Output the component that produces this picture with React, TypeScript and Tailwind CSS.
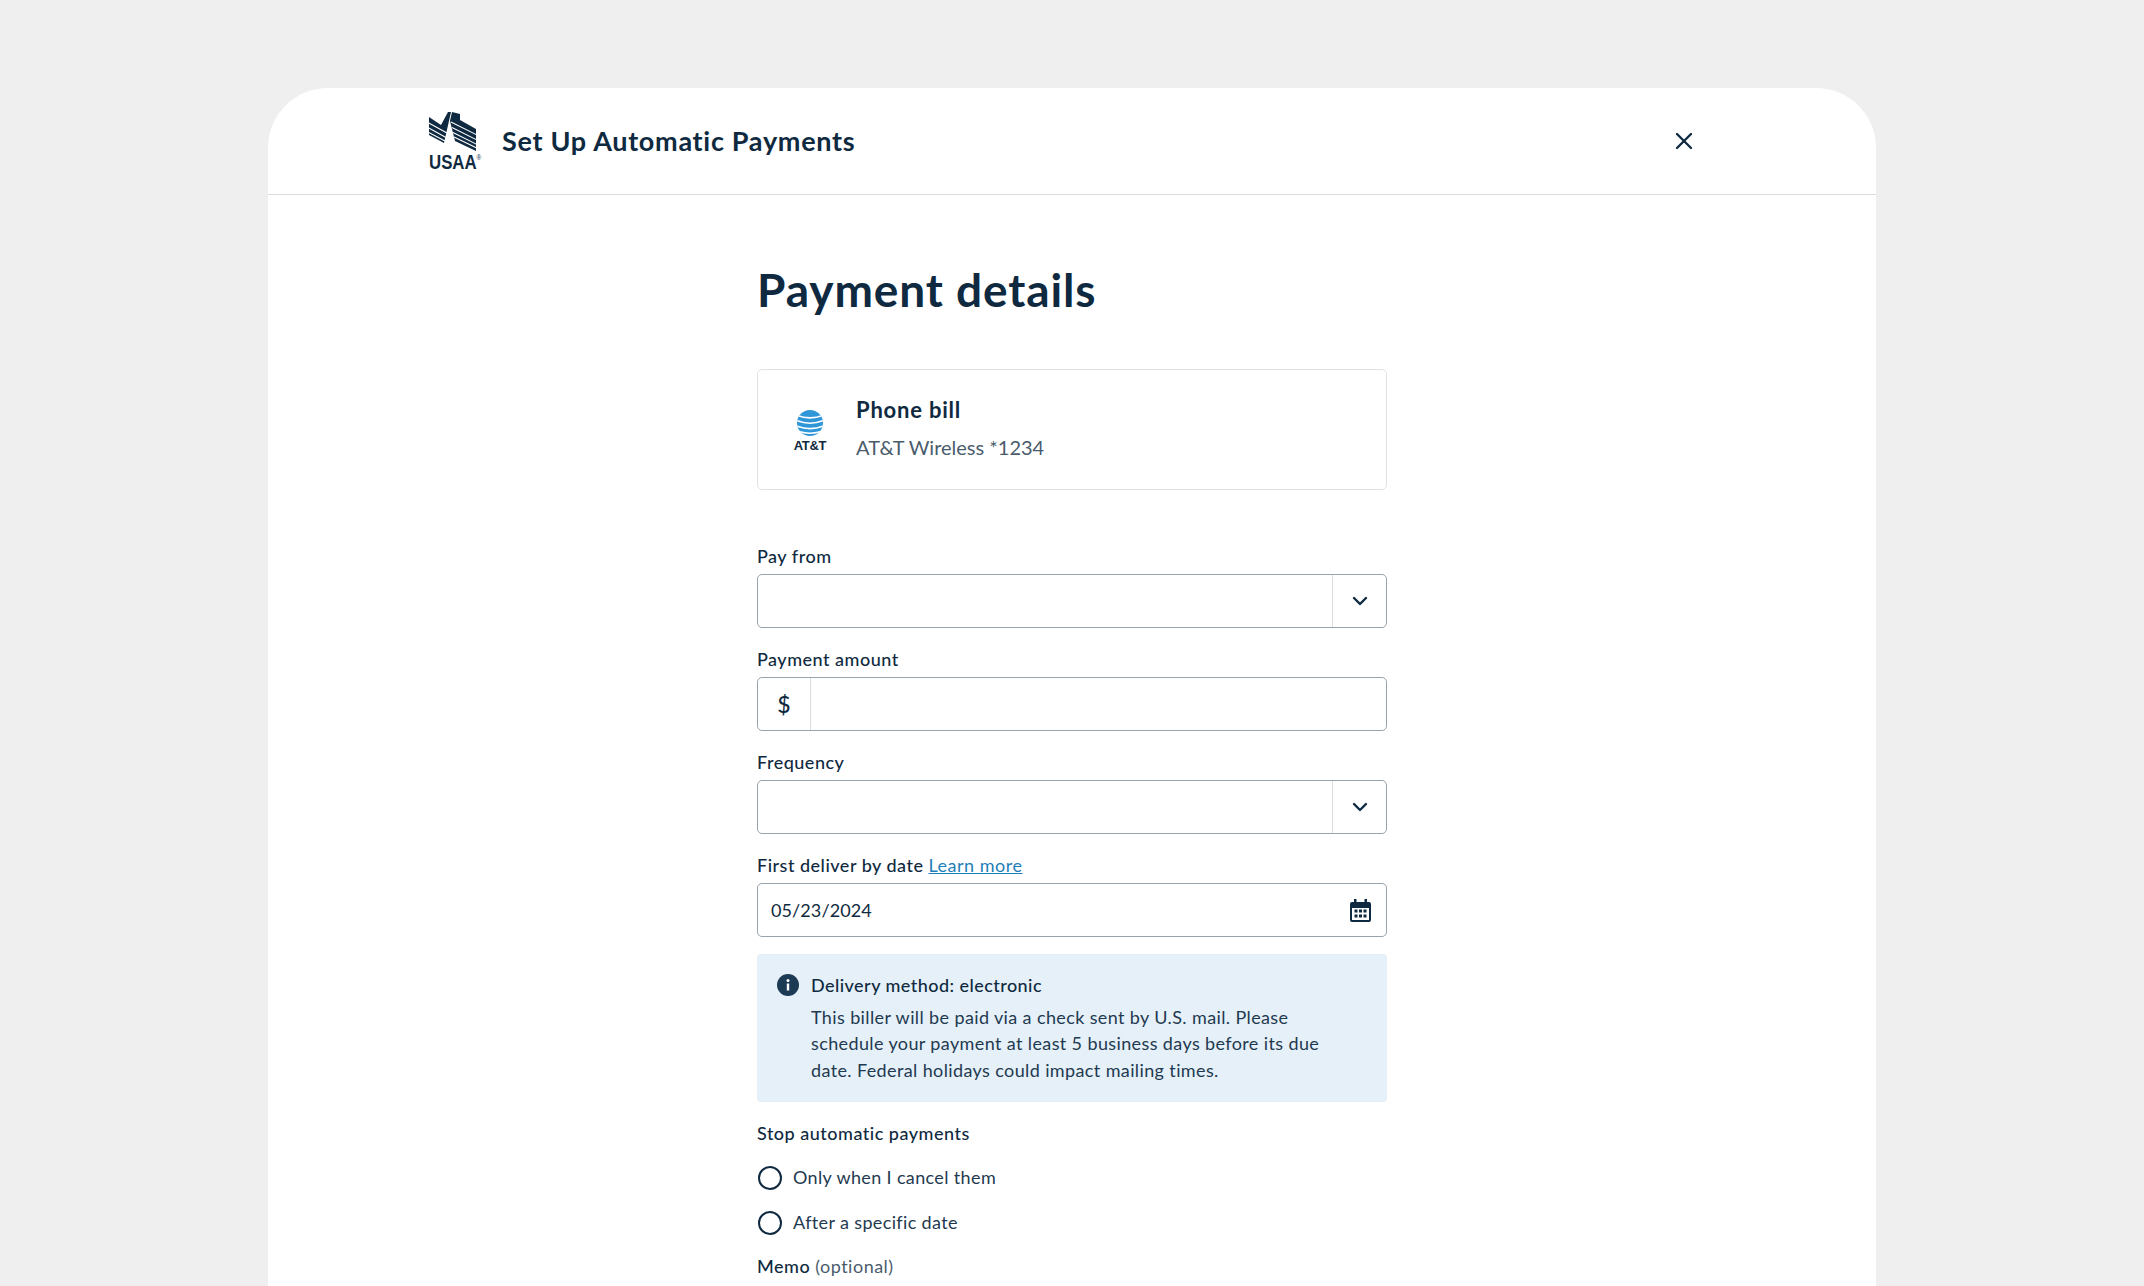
import React from 'react';
import { ChevronDown, X } from 'lucide-react';

const UsaaLogo = () => (
  <div className="w-[53px] h-[57px] shrink-0 ml-[1px] -mt-[3px]">
    <svg viewBox="0 0 47 40" className="w-[47px] h-[40px]" fill="#0f2a40">
      <polygon points="0,6 12,14 19,1 22,1 15,32 0,24" />
      <polygon points="23,1 31,3 31,9 47,18 47,40 26,30 21,10" />
      <g stroke="#fff" strokeWidth="1.1" fill="none">
        <path d="M-1 11.5 L18 22 M-1 16.5 L17 26.5 M-1 21 L16 30" />
        <path d="M22 11 L48 24 M23 16.5 L48 29 M24 21.5 L48 33.5 M25 26 L48 37" />
      </g>
    </svg>
    <div className="-mt-[2px] font-['Liberation_Sans',sans-serif] font-bold text-[21px] leading-[17px] text-[#0f2a40] whitespace-nowrap origin-left scale-x-[0.8]">
      USAA<span className="text-[8px] font-normal align-[9px]">®</span>
    </div>
  </div>
);

const AttLogo = () => (
  <div className="flex flex-col items-center w-[34px] shrink-0 mt-[2px]">
    <svg viewBox="0 0 24 24" className="w-[26px] h-[26px]">
      <defs>
        <clipPath id="globe">
          <circle cx="12" cy="12" r="12" />
        </clipPath>
      </defs>
      <circle cx="12" cy="12" r="12" fill="#2f96d8" />
      <g clipPath="url(#globe)" stroke="#fff" fill="none" strokeWidth="1.5">
        <path d="M-1 4.5 Q12 10 25 4.5" />
        <path d="M-1 9.5 Q12 15 25 9.5" />
        <path d="M-1 14.5 Q12 20 25 14.5" />
        <path d="M-1 19 Q12 24 25 19" />
      </g>
    </svg>
    <span className="font-['Liberation_Sans',sans-serif] font-bold text-[13px] leading-[13px] mt-[3px] tracking-[-0.3px] text-[#0f2a40] whitespace-nowrap">AT&amp;T</span>
  </div>
);

const CalendarIcon = () => (
  <svg viewBox="0 0 21 23" className="w-[21px] h-[23px]" fill="#0f2a40">
    <path d="M4 0h2.5v3h8V0H17v3h2a2 2 0 0 1 2 2v16a2 2 0 0 1-2 2H2a2 2 0 0 1-2-2V5a2 2 0 0 1 2-2h2z" />
    <rect x="2" y="9" width="17" height="12" fill="#fff" />
    <g>
      <rect x="4.5" y="10.5" width="3" height="3" />
      <rect x="9" y="10.5" width="3" height="3" />
      <rect x="13.5" y="10.5" width="3" height="3" />
      <rect x="4.5" y="15.5" width="3" height="3" />
      <rect x="9" y="15.5" width="3" height="3" />
      <rect x="13.5" y="15.5" width="3" height="3" />
    </g>
  </svg>
);

const InfoIcon = () => (
  <svg viewBox="0 0 22 22" className="w-[22px] h-[22px] shrink-0 mt-[2px]">
    <circle cx="11" cy="11" r="11" fill="#1c3a54" />
    <rect x="9.8" y="9.5" width="2.4" height="7" fill="#fff" />
    <circle cx="11" cy="6.6" r="1.5" fill="#fff" />
  </svg>
);

const Label = ({ children }: { children: React.ReactNode }) => (
  <div className="h-[27px] text-[18px] leading-[27px] font-medium tracking-[0.5px] text-[#0f2a40] mb-[4px]">{children}</div>
);

const SelectField = ({ label }: { label: string }) => (
  <div className="mb-[18px]">
    <Label>{label}</Label>
    <div className="flex h-[54px] border border-[#98a3ae] rounded-[5px]">
      <div className="flex-1" />
      <div className="w-[54px] flex items-center justify-center border-l border-[#d9dde1]">
        <ChevronDown size={24} strokeWidth={2.4} color="#0f2a40" />
      </div>
    </div>
  </div>
);

const Radio = ({ label }: { label: string }) => (
  <div className="flex items-center h-[45px] text-[18px] tracking-[0.36px] text-[#1f3a50]">
    <span className="w-[24px] h-[24px] rounded-full border-2 border-[#0f2a40] ml-[1px] mr-[11px]" />
    {label}
  </div>
);

export default function App() {
  return (
    <div className="h-[1286px] overflow-hidden bg-[#efefef] px-[268px] pt-[88px] font-['Lato',sans-serif]">
      <div className="h-[1198px] bg-white rounded-t-[60px]">
        <header className="h-[107px] border-b border-[#d9dde1] flex items-center pl-[160px] pr-[178px]">
          <UsaaLogo />
          <h1 className="ml-[20px] text-[27px] tracking-[0.7px] font-bold text-[#0f2a40]">Set Up Automatic Payments</h1>
          <button className="ml-auto">
            <X size={28} strokeWidth={2} color="#0f2a40" />
          </button>
        </header>

        <main className="w-[630px] ml-[489px]">
          <h2 className="mt-[65px] text-[46px] leading-[60px] tracking-[0.9px] font-bold text-[#0f2a40]">Payment details</h2>

          <div className="mt-[49px] h-[121px] border border-[#dfe3e7] rounded-[5px] flex items-center pl-[35px]">
            <AttLogo />
            <div className="ml-[29px]">
              <div className="text-[22px] leading-[32px] tracking-[0.8px] font-bold text-[#0f2a40] -mt-[2px]">Phone bill</div>
              <div className="text-[20px] leading-[32px] mt-[5px] text-[#4a5c6c]">AT&amp;T Wireless *1234</div>
            </div>
          </div>

          <div className="mt-[53px]">
            <SelectField label="Pay from" />
            <div className="mb-[18px]">
              <Label>Payment amount</Label>
              <div className="flex h-[54px] border border-[#98a3ae] rounded-[5px]">
                <div className="w-[53px] flex items-center justify-center border-r border-[#d9dde1] text-[23px] font-medium text-[#0f2a40]">$</div>
              </div>
            </div>
            <SelectField label="Frequency" />
            <div>
              <Label>
                First deliver by date <a className="text-[#1f7fb8] underline font-normal">Learn more</a>
              </Label>
              <div className="flex items-center justify-between h-[54px] border border-[#98a3ae] rounded-[5px] pl-[13px] pr-[15px] text-[18px] tracking-[0.1px] text-[#0f2a40]">
                05/23/2024
                <CalendarIcon />
              </div>
            </div>
          </div>

          <div className="mt-[17px] h-[148px] bg-[#e5f0f9] rounded-[4px] flex pl-[20px] pt-[18px]">
            <InfoIcon />
            <div className="ml-[12px] text-[18px] leading-[26.6px] tracking-[0.38px] text-[#1f3a50]">
              <div className="font-medium text-[#0f2a40] tracking-[0.45px]">Delivery method: electronic</div>
              <div className="mt-[5px]">
                This biller will be paid via a check sent by U.S. mail. Please
                <br />
                schedule your payment at least 5 business days before its due
                <br />
                date. Federal holidays could impact mailing times.
              </div>
            </div>
          </div>

          <div className="mt-[18px]">
            <Label>Stop automatic payments</Label>
            <div className="mt-[8px]">
              <Radio label="Only when I cancel them" />
              <Radio label="After a specific date" />
            </div>
            <div className="mt-[8px] text-[18px] leading-[27px] tracking-[0.5px] font-medium text-[#0f2a40]">
              Memo <span className="font-normal text-[#4a5c6c]">(optional)</span>
            </div>
          </div>
        </main>
      </div>
    </div>
  );
}
